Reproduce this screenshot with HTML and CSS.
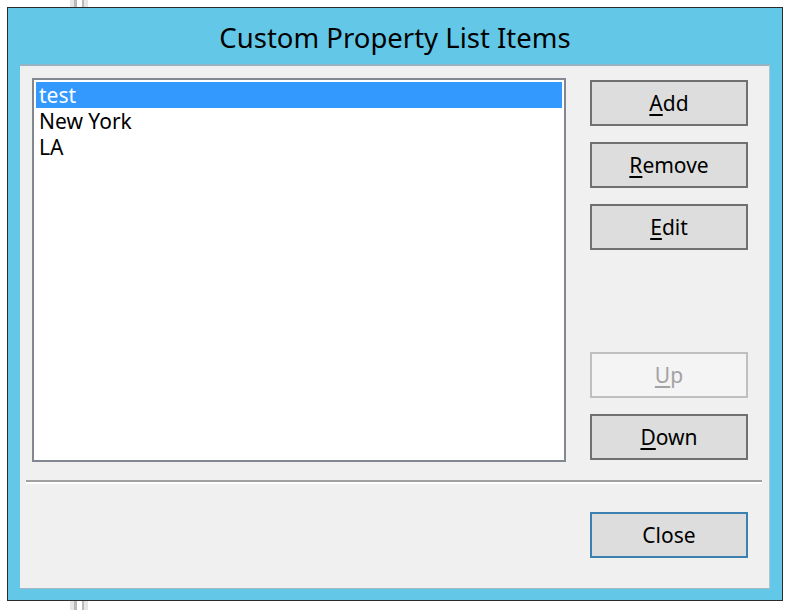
FILE: index.html
```html
<!DOCTYPE html>
<html>
<head>
<meta charset="utf-8">
<title>Custom Property List Items</title>
<link rel="stylesheet" href="styles.css">
</head>
<body>
<div class="window">
  <div class="titlebar">Custom Property List Items</div>
  <div class="client">
    <div class="main">
      <div class="listbox">
        <div class="item selected">test</div>
        <div class="item">New York</div>
        <div class="item">LA</div>
      </div>
      <div class="buttons">
        <button class="btn"><u>A</u>dd</button>
        <button class="btn"><u>R</u>emove</button>
        <button class="btn"><u>E</u>dit</button>
        <div class="spacer"></div>
        <button class="btn disabled"><u>U</u>p</button>
        <button class="btn"><u>D</u>own</button>
      </div>
    </div>
    <div class="separator"></div>
    <div class="footer">
      <button class="btn default">Close</button>
    </div>
  </div>
</div>
</body>
</html>
```

FILE: styles.css
```css
html {
  background: #ffffff linear-gradient(to right,
    transparent 70px, #e6e6e6 70px, #e6e6e6 74px,
    #b9b9b9 74px, #b9b9b9 77px, #ffffff 77px, #ffffff 82px,
    #b9b9b9 82px, #b9b9b9 84px, #e6e6e6 84px, #e6e6e6 88px,
    transparent 88px);
  height: 100%;
}

body {
  margin: 0;
  padding: 7px 0 0 7px;
  font-family: "Noto Sans", "Open Sans", sans-serif;
}

.window {
  width: 774px;
  height: 592px;
  border: 1px solid #2b2b2b;
  background: #63c8e8;
  display: flex;
  flex-direction: column;
}

.titlebar {
  height: 56px;
  display: flex;
  align-items: center;
  justify-content: center;
  font-size: 27.5px;
  color: #000;
  padding-top: 3px;
  box-sizing: border-box;
}

.client {
  margin: 0 12px;
  width: 750px;
  height: 525px;
  box-sizing: border-box;
  background: #f0f0f0;
  border-top: 2px solid #95b3c2;
  border-bottom: 1px solid #a3b8c2;
  border-right: 1px solid #b2c6cf;
  display: flex;
  flex-direction: column;
}

.main {
  display: flex;
  gap: 24px;
  padding: 12px 0 0 12px;
}

.listbox {
  width: 534px;
  height: 384px;
  box-sizing: border-box;
  border: 2px solid #83878f;
  background: #fff;
  padding: 2px;
}

.item {
  height: 26px;
  line-height: 26px;
  font-size: 21px;
  padding-left: 3px;
  color: #000;
}

.item.selected {
  background: #3399ff;
  color: #fff;
}

.buttons {
  display: flex;
  flex-direction: column;
  gap: 16px;
  padding-top: 2px;
  width: 158px;
}

.spacer {
  height: 70px;
}

.btn {
  width: 158px;
  height: 46px;
  box-sizing: border-box;
  border: 2px solid #707070;
  background: #dddddd;
  font-family: "Noto Sans", "Open Sans", sans-serif;
  font-size: 21px;
  color: #000;
  padding: 0;
  margin: 0;
}

.btn u {
  text-underline-offset: 3px;
  text-decoration-thickness: 2px;
}

.btn.disabled {
  border-color: #bfbfbf;
  background: #f4f4f4;
  color: #a2a2a2;
}

.btn.default {
  border-color: #3c7fb1;
}

.separator {
  margin: 18px 0 0 6px;
  width: 736px;
  height: 2px;
  background: #a0a0a0;
  border-bottom: 2px solid #ffffff;
}

.footer {
  display: flex;
  justify-content: flex-end;
  padding: 28px 21px 0 0;
}
```
